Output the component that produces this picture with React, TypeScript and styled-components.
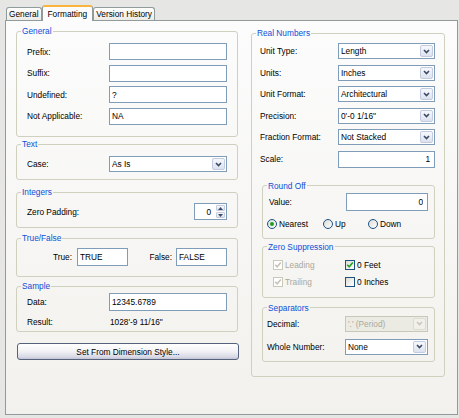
import styled, { createGlobalStyle } from 'styled-components';

const GlobalStyle = createGlobalStyle`
  * {
    box-sizing: border-box;
  }
  html,
  body {
    margin: 0;
    padding: 0;
  }
  body {
    background: #e6e6e4;
    font-family: 'Liberation Sans', Arial, sans-serif;
    font-size: 8.3px;
    color: #000;
    overflow: hidden;
  }
`;

const Dialog = styled.div`
  width: 459px;
  height: 418px;
  padding: 5px 0 0 5px;
`;

const TabStrip = styled.div`
  display: flex;
  align-items: flex-end;
  height: 15px;
  padding-left: 1px;
  position: relative;
  z-index: 1;
`;

const Tab = styled.div<{ $active?: boolean }>`
  height: ${(p) => (p.$active ? 16 : 13)}px;
  margin-bottom: ${(p) => (p.$active ? -1 : 0)}px;
  padding: 0 ${(p) => (p.$active ? 5 : 2)}px;
  display: flex;
  align-items: center;
  border: 1px solid #919b9c;
  border-bottom: none;
  border-top: ${(p) => (p.$active ? '2px solid #f8b43c' : '1px solid #919b9c')};
  border-radius: 3px 3px 0 0;
  background: ${(p) =>
    p.$active ? '#fcfcfc' : 'linear-gradient(#ffffff, #ecebe6)'};
  white-space: nowrap;
`;

const Panel = styled.div`
  width: 453px;
  height: 395px;
  border: 1px solid #919b9c;
  background: linear-gradient(#fcfcfc, #f2f1ed);
  padding: 5px 10px 0;
  display: grid;
  grid-template-columns: 222px 194px;
  column-gap: 13px;
  align-items: start;
`;

const Column = styled.div<{ $mt?: number }>`
  display: flex;
  flex-direction: column;
  margin-top: ${(p) => p.$mt ?? 0}px;
`;

const Group = styled.fieldset<{ $mt?: number; $ml?: number }>`
  margin: ${(p) => p.$mt ?? 0}px 0 0 ${(p) => p.$ml ?? 0}px;
  padding: 0;
  min-width: 0;
  border: 1px solid #d0d0bf;
  border-radius: 3px;
`;

const Legend = styled.legend`
  margin-left: 4px;
  padding: 0 1px;
  height: 10px;
  line-height: 10px;
  color: #0b4fd8;
`;

const GroupBody = styled.div<{ $pad: string; $gap?: number }>`
  padding: ${(p) => p.$pad};
  display: flex;
  flex-direction: column;
  gap: ${(p) => p.$gap ?? 0}px;
`;

const Stack = styled.div<{ $gap: number }>`
  display: flex;
  flex-direction: column;
  gap: ${(p) => p.$gap}px;
`;

const FieldRow = styled.div<{ $label: number; $h: number }>`
  display: grid;
  grid-template-columns: ${(p) => p.$label}px 1fr;
  align-items: center;
  height: ${(p) => p.$h}px;
`;

const Label = styled.span<{ $disabled?: boolean }>`
  color: ${(p) => (p.$disabled ? '#aca899' : '#000')};
  white-space: nowrap;
`;

const TextInput = styled.input<{ $right?: boolean }>`
  width: 100%;
  height: 100%;
  align-self: stretch;
  margin: 0;
  border: 1px solid #7f9db9;
  background: #fff;
  padding: ${(p) => (p.$right ? '0 4px 0 0' : '0 0 0 2px')};
  font: inherit;
  color: #000;
  text-align: ${(p) => (p.$right ? 'right' : 'left')};
  outline: none;
`;

const Combo = styled.div<{ $disabled?: boolean }>`
  height: 100%;
  display: flex;
  border: 1px solid ${(p) => (p.$disabled ? '#c9c7ba' : '#7f9db9')};
  background: ${(p) => (p.$disabled ? '#ebebe4' : '#fff')};
  color: ${(p) => (p.$disabled ? '#aca899' : '#000')};
`;

const ComboValue = styled.span`
  flex: 1;
  display: flex;
  align-items: center;
  padding-left: 2px;
  white-space: nowrap;
  overflow: hidden;
`;

const ComboButton = styled.span<{ $disabled?: boolean }>`
  width: 13px;
  margin: 1px;
  display: flex;
  align-items: center;
  justify-content: center;
  border: 1px solid ${(p) => (p.$disabled ? '#dedcd2' : '#c2cbe0')};
  border-radius: 2px;
  background: ${(p) =>
    p.$disabled ? '#f1f0ea' : 'linear-gradient(#f7f8fb, #dce2ee)'};
`;

const Spin = styled.div`
  height: 100%;
  display: flex;
  border: 1px solid #7f9db9;
  background: #fff;
`;

const SpinValue = styled.span`
  flex: 1;
  display: flex;
  align-items: center;
  justify-content: flex-end;
  padding-right: 4px;
`;

const SpinButtons = styled.span`
  width: 9px;
  margin: 1px;
  display: flex;
  flex-direction: column;
  gap: 1px;
`;

const SpinButton = styled.span`
  flex: 1;
  display: flex;
  align-items: center;
  justify-content: center;
  border: 1px solid #c2cbe0;
  border-radius: 1px;
  background: linear-gradient(#f7f8fb, #dce2ee);
`;

const FlagRow = styled.div`
  display: grid;
  grid-template-columns: 50px 51px 48px 51px;
  align-items: center;
  height: 18px;
`;

const FlagLabel = styled(Label)<{ $pr: number }>`
  text-align: right;
  padding-right: ${(p) => p.$pr}px;
`;

const ResultValue = styled.span`
  padding-left: 1px;
`;

const PushButton = styled.button`
  align-self: flex-start;
  width: 222px;
  height: 17px;
  margin: 11px 0 0 1px;
  padding: 0;
  border: 1px solid #56627c;
  border-radius: 3px;
  background: linear-gradient(#ffffff 0%, #f4f4f7 45%, #d9dae6 85%, #c2c5d6 100%);
  font: inherit;
  color: #000;
`;

const RadioRow = styled.div`
  display: grid;
  grid-template-columns: 56px 45px auto;
  align-items: center;
  height: 12px;
  margin-left: -2px;
`;

const Option = styled.span`
  display: flex;
  align-items: center;
  gap: 2px;
  white-space: nowrap;
`;

const RadioDot = styled.span<{ $on?: boolean }>`
  width: 10px;
  height: 10px;
  border-radius: 50%;
  border: 1px solid #1c5180;
  background: linear-gradient(135deg, #dcdcd7, #ffffff);
  display: flex;
  align-items: center;
  justify-content: center;

  &::after {
    content: '';
    width: 4px;
    height: 4px;
    border-radius: 50%;
    background: ${(p) => (p.$on ? '#21a121' : 'transparent')};
  }
`;

const CheckGrid = styled.div`
  display: grid;
  grid-template-columns: 72px auto;
  grid-auto-rows: 17px;
  align-items: center;
`;

const CheckBox = styled.span<{ $disabled?: boolean }>`
  width: 10px;
  height: 10px;
  border: 1px solid ${(p) => (p.$disabled ? '#cac8bb' : '#1c5180')};
  background: ${(p) =>
    p.$disabled ? '#fff' : 'linear-gradient(135deg, #dcdcd7, #ffffff)'};
  display: flex;
  align-items: center;
  justify-content: center;
`;

function Chevron({ disabled }: { disabled?: boolean }) {
  return (
    <svg width="7" height="5" viewBox="0 0 7 5">
      <path
        d="M1 1l2.5 2.5L6 1"
        fill="none"
        stroke={disabled ? '#c9c7ba' : '#3c4a66'}
        strokeWidth="1.6"
      />
    </svg>
  );
}

function Select({ value, disabled }: { value: string; disabled?: boolean }) {
  return (
    <Combo $disabled={disabled}>
      <ComboValue>{value}</ComboValue>
      <ComboButton $disabled={disabled}>
        <Chevron disabled={disabled} />
      </ComboButton>
    </Combo>
  );
}

function Check({
  label,
  checked,
  disabled,
}: {
  label: string;
  checked?: boolean;
  disabled?: boolean;
}) {
  return (
    <Option>
      <CheckBox $disabled={disabled}>
        {checked && (
          <svg width="8" height="8" viewBox="0 0 8 8">
            <path
              d="M1.2 3.8l2 2L6.8 1.6"
              fill="none"
              stroke={disabled ? '#c5c3b6' : '#21a121'}
              strokeWidth="1.6"
            />
          </svg>
        )}
      </CheckBox>
      <Label $disabled={disabled}>{label}</Label>
    </Option>
  );
}

function Radio({ label, on }: { label: string; on?: boolean }) {
  return (
    <Option>
      <RadioDot $on={on} />
      <span>{label}</span>
    </Option>
  );
}

const realRows: [string, string][] = [
  ['Unit Type:', 'Length'],
  ['Units:', 'Inches'],
  ['Unit Format:', 'Architectural'],
  ['Precision:', `0'-0 1/16"`],
  ['Fraction Format:', 'Not Stacked'],
];

const generalRows: [string, string][] = [
  ['Prefix:', ''],
  ['Suffix:', ''],
  ['Undefined:', '?'],
  ['Not Applicable:', 'NA'],
];

export default function App() {
  return (
    <>
      <GlobalStyle />
      <Dialog>
        <TabStrip>
          <Tab>General</Tab>
          <Tab $active>Formatting</Tab>
          <Tab>Version History</Tab>
        </TabStrip>
        <Panel>
          <Column>
            <Group>
              <Legend>General</Legend>
              <GroupBody $pad="7px 10px 11.5px 10px" $gap={4.5}>
                {generalRows.map(([label, value]) => (
                  <FieldRow key={label} $label={82} $h={17}>
                    <Label>{label}</Label>
                    <TextInput readOnly defaultValue={value} />
                  </FieldRow>
                ))}
              </GroupBody>
            </Group>

            <Group $mt={2}>
              <Legend>Text</Legend>
              <GroupBody $pad="7px 10px 7px 10px">
                <FieldRow $label={82} $h={16}>
                  <Label>Case:</Label>
                  <Select value="As Is" />
                </FieldRow>
              </GroupBody>
            </Group>

            <Group $mt={7}>
              <Legend>Integers</Legend>
              <GroupBody $pad="6px 10px 7px 10px">
                <FieldRow $label={167} $h={17}>
                  <Label>Zero Padding:</Label>
                  <Spin>
                    <SpinValue>0</SpinValue>
                    <SpinButtons>
                      <SpinButton>
                        <svg width="5" height="3" viewBox="0 0 5 3">
                          <path d="M0 3L2.5 0L5 3z" fill="#3c4a66" />
                        </svg>
                      </SpinButton>
                      <SpinButton>
                        <svg width="5" height="3" viewBox="0 0 5 3">
                          <path d="M0 0L2.5 3L5 0z" fill="#3c4a66" />
                        </svg>
                      </SpinButton>
                    </SpinButtons>
                  </Spin>
                </FieldRow>
              </GroupBody>
            </Group>

            <Group $mt={5}>
              <Legend>True/False</Legend>
              <GroupBody $pad="5px 10px 10px 10px">
                <FlagRow>
                  <FlagLabel $pr={5}>True:</FlagLabel>
                  <TextInput readOnly defaultValue="TRUE" />
                  <FlagLabel $pr={4}>False:</FlagLabel>
                  <TextInput readOnly defaultValue="FALSE" />
                </FlagRow>
              </GroupBody>
            </Group>

            <Group $mt={4}>
              <Legend>Sample</Legend>
              <GroupBody $pad="2px 10px 2px 10px" $gap={4}>
                <FieldRow $label={82} $h={18}>
                  <Label>Data:</Label>
                  <TextInput readOnly defaultValue="12345.6789" />
                </FieldRow>
                <FieldRow $label={82} $h={14}>
                  <Label>Result:</Label>
                  <ResultValue>{`1028'-9 11/16"`}</ResultValue>
                </FieldRow>
              </GroupBody>
            </Group>

            <PushButton type="button">Set From Dimension Style...</PushButton>
          </Column>

          <Column $mt={2}>
            <Group>
              <Legend>Real Numbers</Legend>
              <GroupBody $pad="5px 9px 14px 8px">
                <Stack $gap={5.6}>
                  {realRows.map(([label, value]) => (
                    <FieldRow key={label} $label={78} $h={16}>
                      <Label>{label}</Label>
                      <Select value={value} />
                    </FieldRow>
                  ))}
                  <FieldRow $label={78} $h={17}>
                    <Label>Scale:</Label>
                    <TextInput readOnly defaultValue="1" $right />
                  </FieldRow>
                </Stack>

                <Group $mt={13} $ml={2}>
                  <Legend>Round Off</Legend>
                  <GroupBody $pad="2px 6px 8px 6px" $gap={7}>
                    <FieldRow $label={77} $h={18}>
                      <Label>Value:</Label>
                      <TextInput readOnly defaultValue="0" $right />
                    </FieldRow>
                    <RadioRow>
                      <Radio label="Nearest" on />
                      <Radio label="Up" />
                      <Radio label="Down" />
                    </RadioRow>
                  </GroupBody>
                </Group>

                <Group $mt={3} $ml={2}>
                  <Legend>Zero Suppression</Legend>
                  <GroupBody $pad="5px 6px 6px 10px">
                    <CheckGrid>
                      <Check label="Leading" checked disabled />
                      <Check label="0 Feet" checked />
                      <Check label="Trailing" checked disabled />
                      <Check label="0 Inches" />
                    </CheckGrid>
                  </GroupBody>
                </Group>

                <Group $mt={5} $ml={2}>
                  <Legend>Separators</Legend>
                  <GroupBody $pad="3px 6px 6px 4px" $gap={7}>
                    <FieldRow $label={78} $h={16}>
                      <Label>Decimal:</Label>
                      <Select value={`'.' (Period)`} disabled />
                    </FieldRow>
                    <FieldRow $label={78} $h={16}>
                      <Label>Whole Number:</Label>
                      <Select value="None" />
                    </FieldRow>
                  </GroupBody>
                </Group>
              </GroupBody>
            </Group>
          </Column>
        </Panel>
      </Dialog>
    </>
  );
}
